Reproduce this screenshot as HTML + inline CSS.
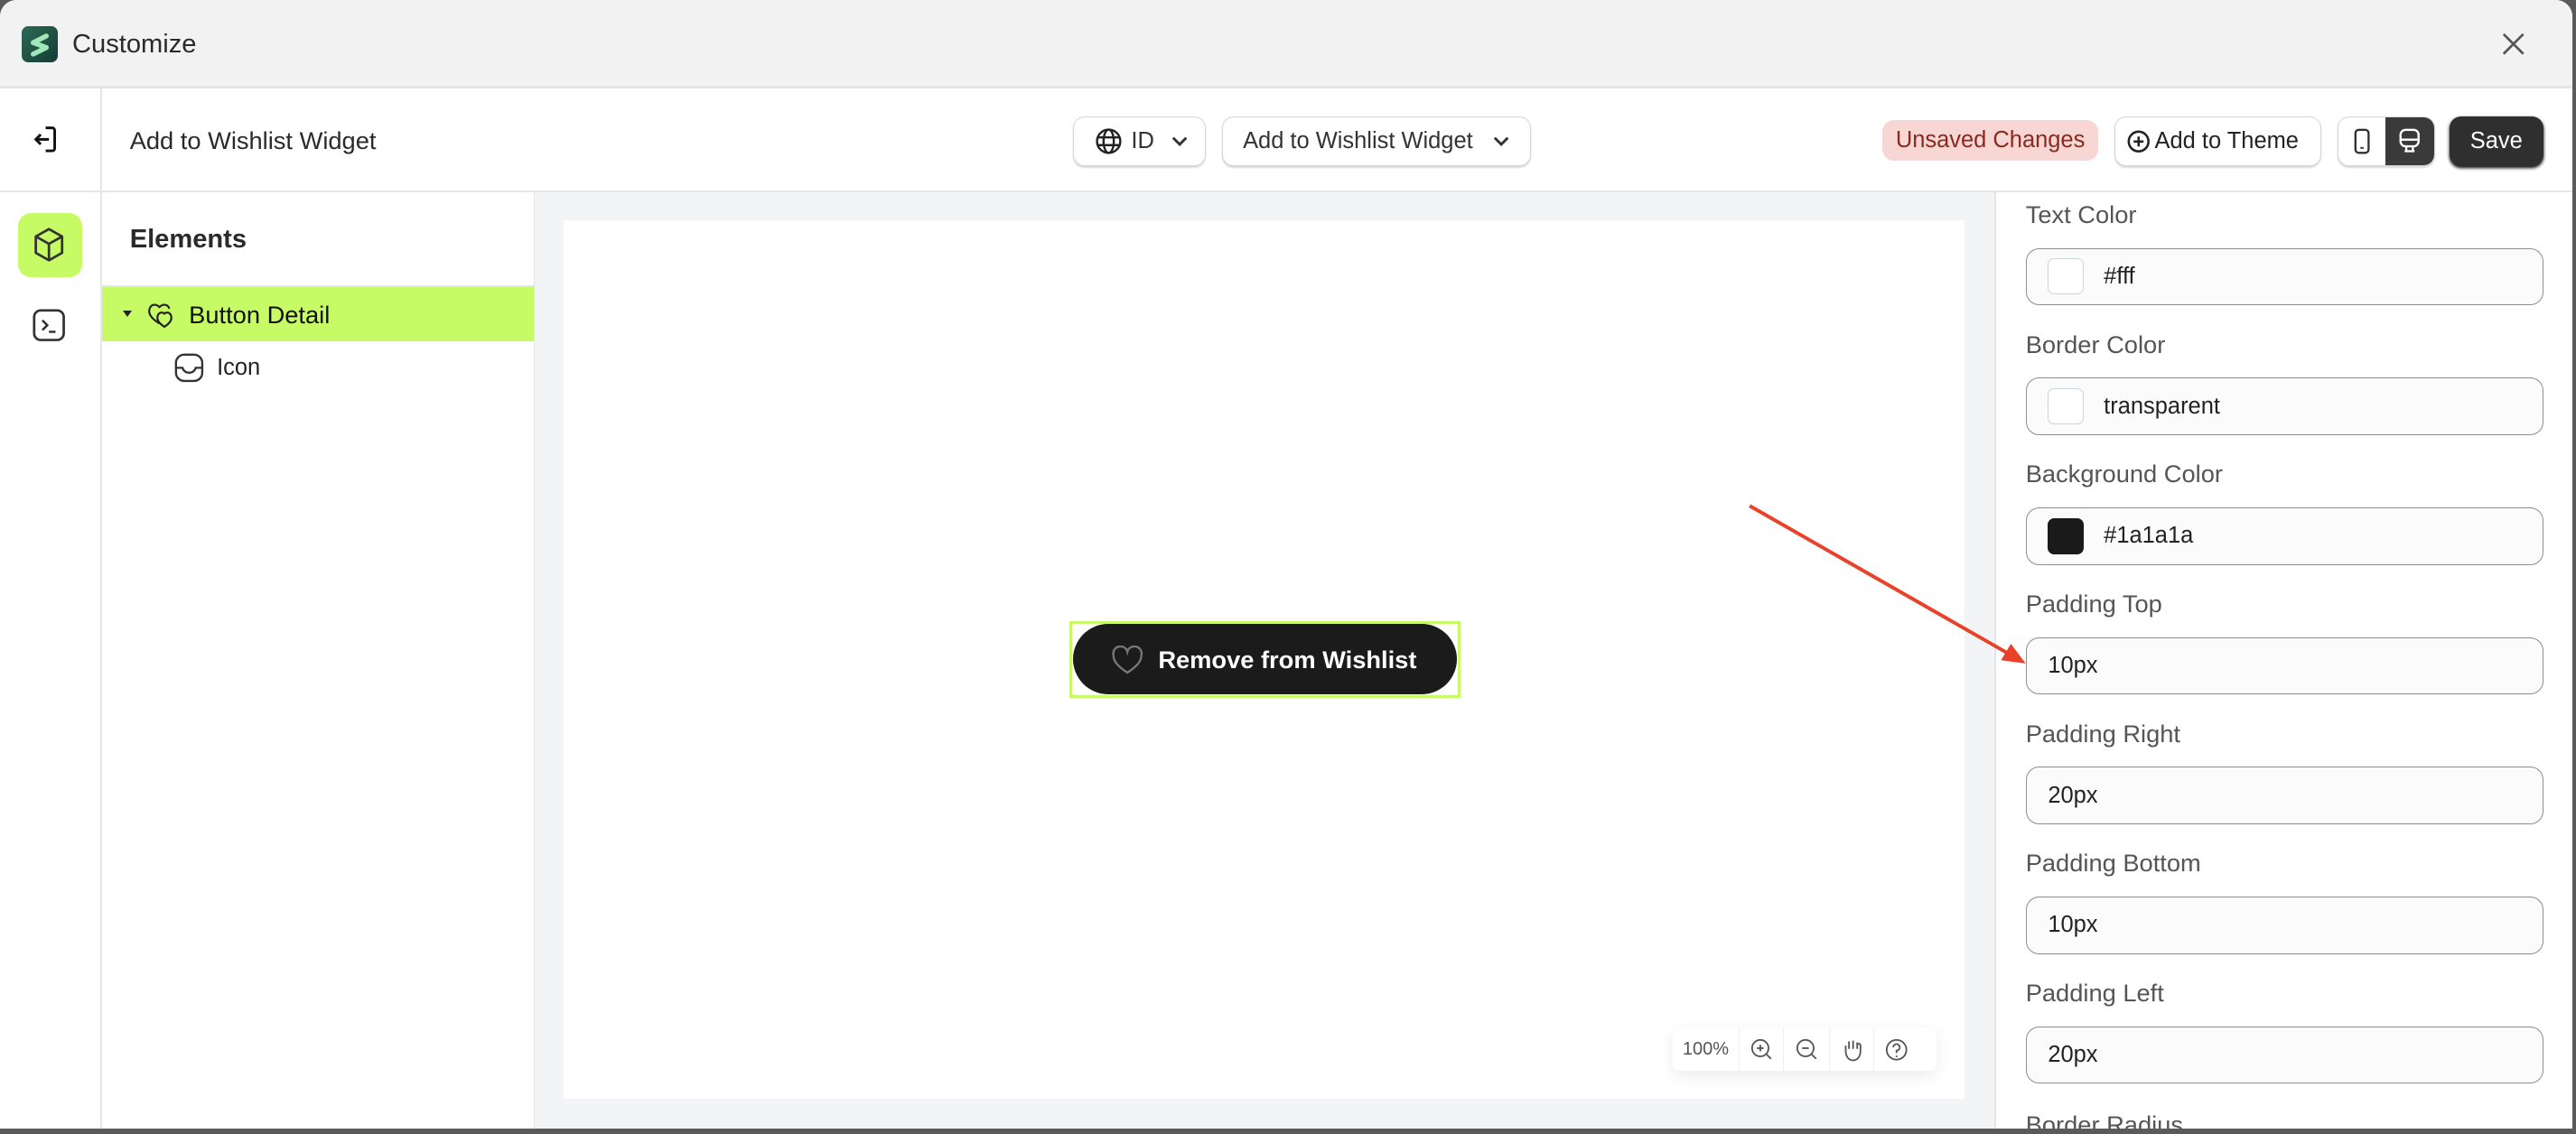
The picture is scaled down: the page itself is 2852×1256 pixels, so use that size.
<!DOCTYPE html>
<html><head><meta charset="utf-8"><style>
*{box-sizing:border-box;margin:0;padding:0}
html,body{width:2852px;height:1256px;overflow:hidden;background:#5a5a5a}
#r{zoom:1.8189;width:1568px;height:691px;position:relative;font-family:"Liberation Sans",Arial,sans-serif;color:#222;background:#5a5a5a}
.win{position:absolute;left:0;top:0;width:1566px;height:687px;background:#fff;border-radius:10px 10px 0 0;overflow:hidden}
.a{position:absolute}
.title{left:0;top:0;width:1566px;height:54px;background:#f2f2f2;border-bottom:2px solid #e4e4e4}
.box{border:1px solid #d6d6d6;border-radius:7px;background:#fff;box-shadow:0 1px 1px rgba(0,0,0,.15);display:flex;align-items:center;font-size:14px;color:#333}
.lbl{position:absolute;left:1233px;font-size:15px;color:#555}
.inp{position:absolute;left:1233px;width:315px;height:35px;border:1px solid #8d8d8d;border-radius:8px;background:#fbfbfb;font-size:14px;color:#222;display:flex;align-items:center;padding-left:13px}
.sw{width:22px;height:22px;border:1px solid #ccd2da;border-radius:4px;margin-right:12px;background:#fff}
.zb{display:flex;align-items:center;justify-content:center;border-right:1px solid #eee}
</style></head><body><div id="r"><div class="win">
<div class="a title"></div>
<div class="a" style="left:13px;top:16px;width:22px;height:22px;border-radius:4px;background:linear-gradient(135deg,#2d6b57,#163a34)"><svg width="22" height="22" viewBox="0 0 22 22"><path d="M15 6 L7 10 M7 10 L15 13 M15 13 L7 17" stroke="#9fe6b8" stroke-width="3" fill="none" stroke-linecap="round"/></svg></div>
<div class="a" style="left:44px;top:18px;font-size:16px;font-weight:500;color:#2a2a2a">Customize</div>
<svg class="a" style="left:1523px;top:20px" width="14" height="14"><path d="M1 1L13 13M13 1L1 13" stroke="#555" stroke-width="1.5"/></svg>
<div class="a" style="left:0;top:116px;width:1566px;height:1px;background:#e6e6e6"></div>
<div class="a" style="left:61px;top:54px;width:1px;height:633px;background:#e6e6e6"></div>
<svg class="a" style="left:20px;top:76px" width="16" height="18" viewBox="0 0 16 18"><path d="M8 2h4a1.5 1.5 0 0 1 1.5 1.5v11A1.5 1.5 0 0 1 12 16H8M10 9H2M5 6L2 9l3 3" stroke="#111" stroke-width="1.6" fill="none"/></svg>
<div class="a" style="left:79px;top:77px;font-size:15px;color:#2a2a2a">Add to Wishlist Widget</div>
<div class="a box" style="left:653px;top:71px;width:81px;height:30px;padding-left:13px"><svg width="17" height="17" viewBox="0 0 18 18"><circle cx="9" cy="9" r="7.5" stroke="#222" stroke-width="1.4" fill="none"/><ellipse cx="9" cy="9" rx="3.3" ry="7.5" stroke="#222" stroke-width="1.4" fill="none"/><path d="M1.5 6.5h15M1.5 11.5h15" stroke="#222" stroke-width="1.4"/></svg><span style="margin-left:5px">ID</span></div>
<div class="a box" style="left:744px;top:71px;width:188px;height:30px;padding-left:12px">Add to Wishlist Widget<svg style="margin-left:12px" width="10" height="8"><path d="M1 2l4 4 4-4" stroke="#333" stroke-width="1.6" fill="none"/></svg></div>
<svg class="a" style="left:713px;top:82px" width="10" height="8"><path d="M1 2l4 4 4-4" stroke="#333" stroke-width="1.6" fill="none"/></svg>
<div class="a" style="left:1146px;top:73px;width:131px;height:25px;background:#f8d6d3;border-radius:7px;color:#8a2a1e;font-size:14px;text-align:center;line-height:25px">Unsaved Changes</div>
<div class="a box" style="left:1287px;top:71px;width:126px;height:30px;padding-left:7px;color:#222"><svg width="14" height="14"><circle cx="7" cy="7" r="6" stroke="#222" stroke-width="1.4" fill="none"/><path d="M7 4v6M4 7h6" stroke="#222" stroke-width="1.4"/></svg><span style="margin-left:3px">Add to Theme</span></div>
<div class="a box" style="left:1423px;top:71px;width:59px;height:30px;overflow:hidden"><div style="width:29px;height:30px;display:flex;align-items:center;justify-content:center"><svg width="10" height="16"><rect x="1" y="1" width="8" height="14" rx="2" stroke="#333" stroke-width="1.3" fill="none"/><path d="M4 12h2" stroke="#333"/></svg></div><div style="width:30px;height:30px;background:#3a3a3a;display:flex;align-items:center;justify-content:center"><svg width="14" height="16"><rect x="1.5" y="1" width="11" height="10" rx="3" stroke="#fff" stroke-width="1.3" fill="none"/><path d="M2 7h10M5 11v3M9 11v3M4 14h6" stroke="#fff" stroke-width="1.3"/></svg></div></div>
<div class="a" style="left:1491px;top:71px;width:57px;height:30px;background:#2f2f2f;border-radius:7px;color:#fff;font-size:14px;text-align:center;line-height:30px;box-shadow:0 1px 2px #000">Save</div>
<div class="a" style="left:11px;top:130px;width:39px;height:39px;background:#c7fb65;border-radius:8px"></div>
<svg class="a" style="left:20px;top:138px" width="20" height="22" viewBox="0 0 20 22"><path d="M10 1.5L18 6v10l-8 4.5L2 16V6z M2 6l8 4.5L18 6 M10 10.5v10" stroke="#333" stroke-width="1.5" fill="none" stroke-linejoin="round"/></svg>
<svg class="a" style="left:20px;top:188px" width="20" height="20"><rect x="1" y="1" width="18" height="18" rx="4" stroke="#333" stroke-width="1.5" fill="none"/><path d="M6 7l3 3-3 3M10 14h4" stroke="#333" stroke-width="1.4" fill="none"/></svg>
<div class="a" style="left:79px;top:137px;font-size:16px;font-weight:bold;color:#2a2a2a">Elements</div>
<div class="a" style="left:62px;top:174px;width:263px;height:1px;background:#e6e6e6"></div>
<div class="a" style="left:62px;top:175px;width:263px;height:33px;background:#c7fb65"></div>
<div class="a" style="left:75px;top:189px;width:0;height:0;border-left:3px solid transparent;border-right:3px solid transparent;border-top:4px solid #222"></div>
<svg class="a" style="left:89px;top:182px" width="18" height="18" viewBox="0 0 18 18"><path d="M8 15C3 12 1 9 2 6c1-3 4-3 6-1 2-2 5-2 6 1" stroke="#222" stroke-width="1.2" fill="none"/><path d="M11 17c-3-2-5-4-4-7 1-2 3-2 4-1 1-1 3-1 4 1 1 3-1 5-4 7z" stroke="#222" stroke-width="1.2" fill="none"/></svg>
<div class="a" style="left:115px;top:183px;font-size:15px;color:#111">Button Detail</div>
<svg class="a" style="left:106px;top:215px" width="18" height="18"><rect x="1" y="1" width="16" height="16" rx="5" stroke="#333" stroke-width="1.3" fill="none"/><path d="M1 9h4c1 4 7 4 8 0h4" stroke="#333" stroke-width="1.3" fill="none"/></svg>
<div class="a" style="left:132px;top:216px;font-size:14px;color:#222">Icon</div>
<div class="a" style="left:325px;top:117px;width:889px;height:570px;background:#f3f4f6;border-left:1px solid #e3e5e8"></div>
<div class="a" style="left:343px;top:134px;width:853px;height:535px;background:#fff"></div>
<div class="a" style="left:651px;top:378px;width:238px;height:47px;border:2px solid #c7fb65"></div>
<div class="a" style="left:653px;top:380px;width:234px;height:43px;background:#1b1b1b;border-radius:22px"></div>
<svg class="a" style="left:676px;top:393px" width="20" height="18" viewBox="0 0 20 18"><path d="M10 16.5C4 12.5 1.5 9.5 1.5 6A4.2 4.2 0 0 1 10 3.8 4.2 4.2 0 0 1 18.5 6c0 3.5-2.5 6.5-8.5 10.5z" stroke="#777" stroke-width="1.3" fill="none"/></svg>
<div class="a" style="left:705px;top:393px;font-size:15px;font-weight:bold;color:#fff">Remove from Wishlist</div>
<div class="a" style="left:1018px;top:626px;width:161px;height:26px;background:#fff;border-radius:4px;box-shadow:0 3px 10px rgba(0,0,0,.08);display:flex;font-size:11px;color:#555">
<div class="zb" style="width:41px">100%</div>
<div class="zb" style="width:27px"><svg width="14" height="14"><circle cx="6" cy="6" r="5" stroke="#555" fill="none"/><path d="M6 4v4M4 6h4M9.5 9.5l3 3" stroke="#555"/></svg></div>
<div class="zb" style="width:28px"><svg width="14" height="14"><circle cx="6" cy="6" r="5" stroke="#555" fill="none"/><path d="M4 6h4M9.5 9.5l3 3" stroke="#555"/></svg></div>
<div class="zb" style="width:27px"><svg width="14" height="15"><path d="M3 8V5M5 7V2.5M7.5 7V2M10 7V3M12 8V5c0-1.5-2-1.5-2 0M3 8c0 4 2 6 4.5 6s4.5-2 4.5-6" stroke="#555" fill="none"/></svg></div>
<div class="zb" style="width:27px;border:0"><svg width="14" height="14"><circle cx="7" cy="7" r="6" stroke="#555" fill="none"/><path d="M5 5.5a2 2 0 1 1 2 2v1.5M7 10.5v1" stroke="#555" fill="none"/></svg></div></div>
<div class="a" style="left:1214px;top:117px;width:1px;height:570px;background:#e3e5e8"></div>
<div class="lbl" style="top:122px">Text Color</div>
<div class="inp" style="top:151px"><div class="sw"></div>#fff</div>
<div class="lbl" style="top:201px">Border Color</div>
<div class="inp" style="top:230px"><div class="sw"></div>transparent</div>
<div class="lbl" style="top:280px">Background Color</div>
<div class="inp" style="top:309px"><div class="sw" style="background:#1a1a1a;border-color:#1a1a1a"></div>#1a1a1a</div>
<div class="lbl" style="top:359px">Padding Top</div>
<div class="inp" style="top:388px">10px</div>
<div class="lbl" style="top:438px">Padding Right</div>
<div class="inp" style="top:467px">20px</div>
<div class="lbl" style="top:517px">Padding Bottom</div>
<div class="inp" style="top:546px">10px</div>
<div class="lbl" style="top:596px">Padding Left</div>
<div class="inp" style="top:625px">20px</div>
<div class="lbl" style="top:676px">Border Radius</div>
<svg class="a" style="left:0;top:0" width="1566" height="687"><path d="M1065 308L1226 400" stroke="#e8432a" stroke-width="2.2"/><path d="M1233 404L1218 402L1224 392z" fill="#e8432a"/></svg>
</div></div></body></html>
